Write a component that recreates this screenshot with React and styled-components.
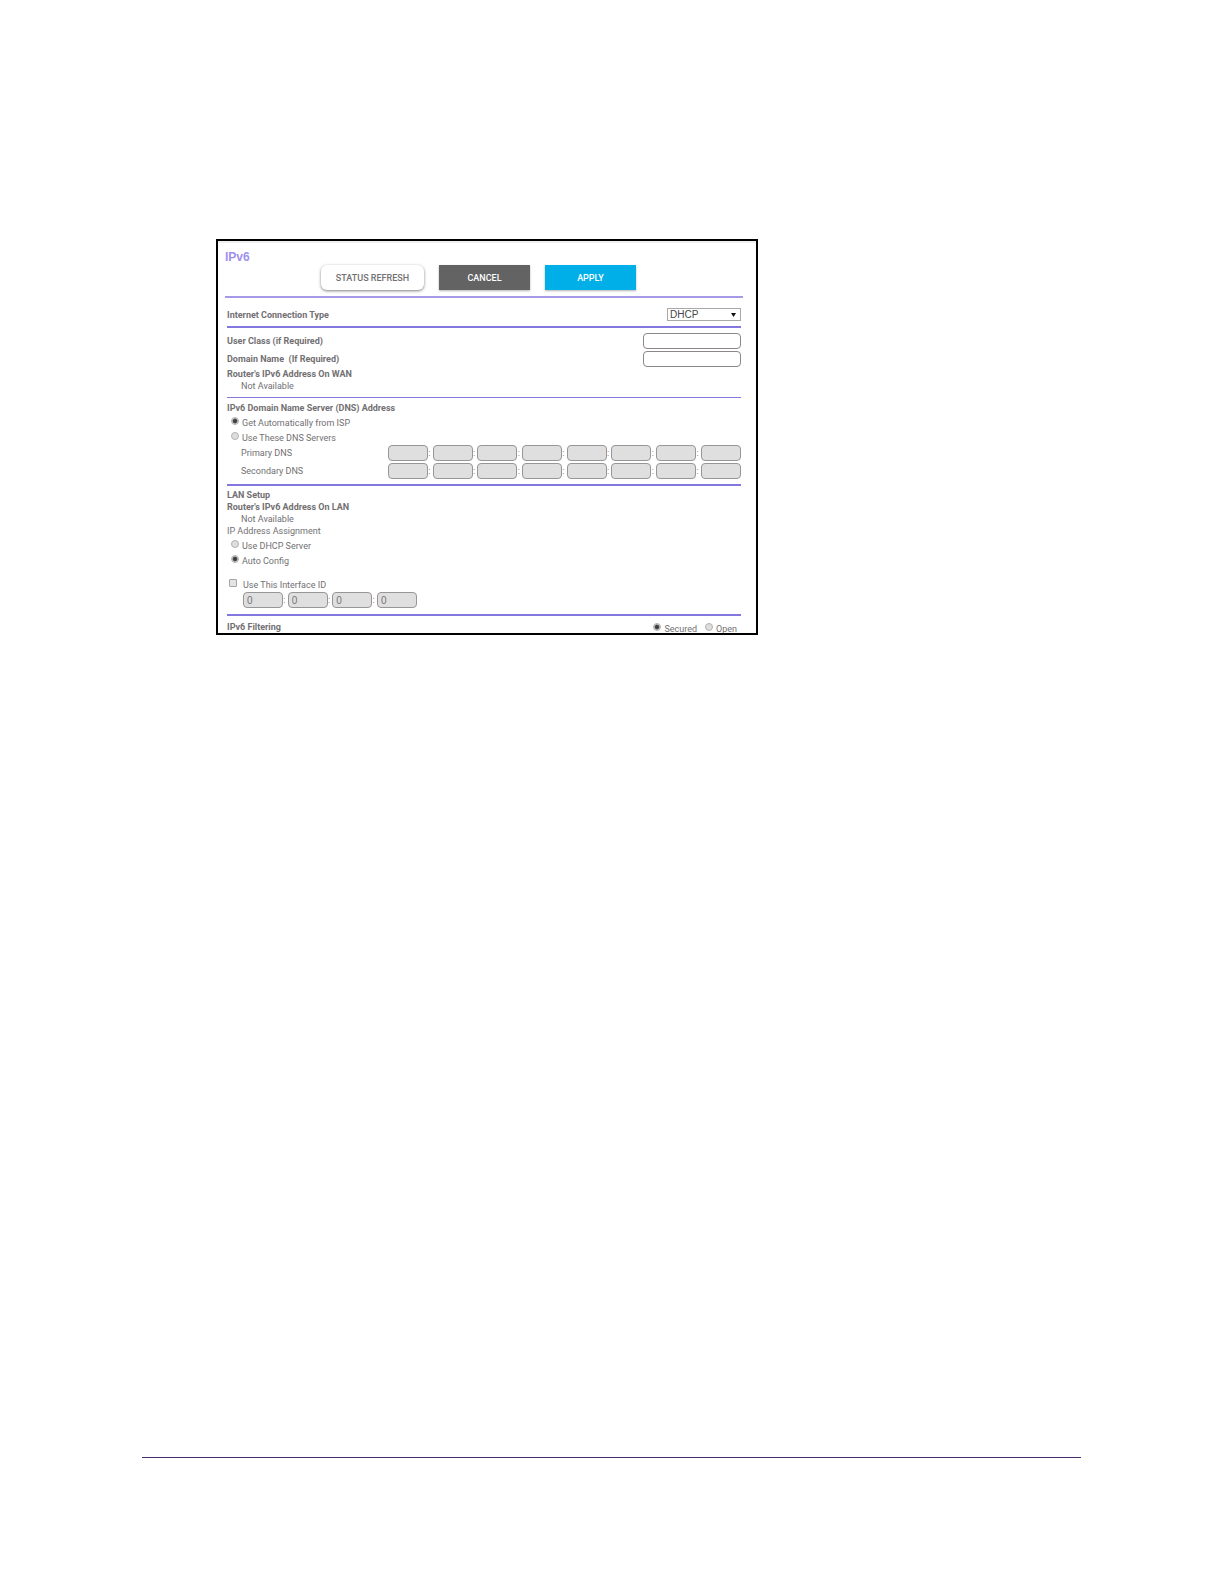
import React, { useState } from 'react'
import styled, { createGlobalStyle, ThemeProvider } from 'styled-components'

const theme = {
  colors: {
    text: '#727072',
    title: '#9f90ee',
    headerRule: '#a898e8',
    rule: '#8377e0',
    apply: '#00aee8',
    cancel: '#636363',
    disabled: '#e0dfdf',
    footer: '#4d2a68',
  },
  font: {
    body: 'Roboto, "Liberation Sans", Arial, sans-serif',
    field: '"Liberation Sans", Arial, sans-serif',
  },
}

const GlobalStyle = createGlobalStyle`
  *, *::before, *::after { box-sizing: border-box; }
  body { margin: 0; background: #fff; }
  input, select, button { margin: 0; font-family: inherit; }
`

const Page = styled.div`
  min-height: 100vh;
  display: flex;
  flex-direction: column;
  justify-content: space-between;
  padding: 239px 143px 126px 142px;
  font-family: ${({ theme }) => theme.font.body};
  font-size: 9px;
  line-height: 12px;
  color: ${({ theme }) => theme.colors.text};
`

const Main = styled.main`
  padding-left: 74px;
`

const Panel = styled.form`
  width: 100%;
  max-width: 542px;
  border: 2px solid #000;
  overflow: hidden;
`

const TopStrip = styled.div`
  height: 2px;
  background: #efefef;
`

const Header = styled.header`
  margin: 0 13px 0 7px;
  padding: 6px 0;
  border-bottom: 2px solid ${({ theme }) => theme.colors.headerRule};
`

const Title = styled.h1`
  margin: 0;
  font-family: ${({ theme }) => theme.font.field};
  font-size: 12px;
  line-height: 16px;
  color: ${({ theme }) => theme.colors.title};
`

const Toolbar = styled.div`
  display: flex;
  justify-content: center;
  gap: 15px;
  padding-right: 11px;
`

const Button = styled.button`
  width: 91px;
  height: 25px;
  padding: 0;
  border: none;
  font-size: 9px;
  font-weight: 500;
  color: #fff;
  background: ${({ theme, $tone }) => theme.colors[$tone]};
  box-shadow: 0 1px 2px rgba(0, 0, 0, 0.3);
`

const OutlineButton = styled(Button)`
  width: 103px;
  border-radius: 6px;
  color: ${({ theme }) => theme.colors.text};
  background: #fff;
  box-shadow: 0 1px 3px rgba(0, 0, 0, 0.5);
`

const Section = styled.section`
  margin: 0 15px 0 9px;
  padding: ${({ $top }) => $top}px 0 ${({ $bottom = 5 }) => $bottom}px;
  border-bottom: ${({ $rule = 2 }) => $rule}px solid ${({ theme }) => theme.colors.rule};
`

const LastSection = styled(Section)`
  padding-bottom: 0;
  border-bottom: none;
`

const Row = styled.div`
  display: flex;
  justify-content: space-between;
  align-items: center;
  height: ${({ $height = 18 }) => $height}px;
  padding-left: ${({ $indent = 0 }) => $indent}px;
`

const Heading = styled.h2`
  margin: 0;
  font-size: 9px;
  line-height: 12px;
`

const BoldLabel = styled.label`
  font-weight: bold;
  white-space: pre;
`

const Text = styled.div`
  padding-left: ${({ $indent = 0 }) => $indent}px;
`

const TextInput = styled.input`
  width: 98px;
  height: 16px;
  padding: 0 3px;
  border: 1px solid #8b8688;
  border-radius: 4px;
  background: #fff;
  font-size: 10px;
`

const SelectBox = styled.div`
  position: relative;
  width: 74px;
  height: 13px;
`

const Select = styled.select`
  display: block;
  width: 100%;
  height: 100%;
  padding: 0 2px;
  border: 1px solid #a9a9a9;
  border-radius: 0;
  appearance: none;
  background: #fff;
  font-family: ${({ theme }) => theme.font.field};
  font-size: 10px;
  line-height: 11px;
  color: #444;
`

const Arrow = styled.svg`
  position: absolute;
  top: 5px;
  right: 5px;
  pointer-events: none;
`

const Option = styled.label`
  display: flex;
  align-items: flex-end;
  gap: 3px;
  height: 15px;
  padding-left: 4px;
`

const Radio = styled.input`
  appearance: none;
  flex: none;
  width: 8px;
  height: 8px;
  margin-bottom: 4px;
  border: 1px solid #b2b2b2;
  border-radius: 50%;
  background: #dedede;
  &:checked {
    background: radial-gradient(circle, #3c3c3c 0 1px, #555 2px, #e4e4e4 3px);
  }
`

const CheckOption = styled.label`
  display: flex;
  align-items: flex-start;
  gap: 6px;
  height: 12px;
  margin-top: 12px;
  padding-left: 2px;
`

const Checkbox = styled.input`
  appearance: none;
  flex: none;
  width: 8px;
  height: 8px;
  border: 1px solid #a5a5a5;
  border-radius: 1px;
  background: #e4e4e4;
  &:checked { background: #555; }
`

const Segments = styled.div`
  display: flex;
  justify-content: space-between;
  align-items: center;
  width: ${({ $width }) => $width}px;
`

const Segment = styled.input`
  width: 40px;
  height: 16px;
  padding: 0 3px;
  border: 1px solid #989596;
  border-radius: 4px;
  background: ${({ theme }) => theme.colors.disabled};
  font-family: ${({ theme }) => theme.font.field};
  font-size: 10px;
  color: #757374;
`

const Colon = styled.span`
  margin-right: 2px;
`

const FilterOptions = styled.div`
  display: flex;
  gap: 4px;
  padding-right: 4px;
`

const FooterRule = styled.hr`
  width: 100%;
  height: 1px;
  margin: 0;
  border: none;
  background: ${({ theme }) => theme.colors.footer};
`

const AddressInput = ({ label, name, count, width, value = '' }) => (
  <Segments $width={width} role='group' aria-label={label}>
    {Array.from({ length: count }, (_, idx) => (
      <React.Fragment key={idx}>
        {idx > 0 && <Colon>:</Colon>}
        <Segment
          name={`${name}${idx}`}
          aria-label={`${label} ${idx + 1}`}
          defaultValue={value}
          disabled
        />
      </React.Fragment>
    ))}
  </Segments>
)

const RadioOption = ({ name, value, current, onChange, children }) => (
  <Option>
    <Radio
      type='radio'
      name={name}
      value={value}
      checked={current === value}
      onChange={() => onChange(value)}
    />
    {children}
  </Option>
)

const App = () => {
  const [dns, setDns] = useState('auto')
  const [assign, setAssign] = useState('config')
  const [filter, setFilter] = useState('secured')

  return (
    <ThemeProvider theme={theme}>
      <GlobalStyle />
      <Page>
        <Main>
          <Panel onSubmit={e => e.preventDefault()}>
            <TopStrip />
            <Header>
              <Title>IPv6</Title>
              <Toolbar>
                <OutlineButton type='button'>STATUS REFRESH</OutlineButton>
                <Button type='reset' $tone='cancel'>CANCEL</Button>
                <Button type='submit' $tone='apply'>APPLY</Button>
              </Toolbar>
            </Header>

            <Section $top={10}>
              <Row $height={13}>
                <BoldLabel htmlFor='connection'>Internet Connection Type</BoldLabel>
                <SelectBox>
                  <Select id='connection' defaultValue='dhcp'>
                    <option value='dhcp'>DHCP</option>
                  </Select>
                  <Arrow width='5' height='4' viewBox='0 0 5 4'>
                    <path d='M0 0h5L2.5 4z' fill='#111' />
                  </Arrow>
                </SelectBox>
              </Row>
            </Section>

            <Section $top={4} $rule={1}>
              <Row>
                <BoldLabel htmlFor='userClass'>User Class (if Required)</BoldLabel>
                <TextInput id='userClass' type='text' />
              </Row>
              <Row>
                <BoldLabel htmlFor='domainName'>{'Domain Name  (If Required)'}</BoldLabel>
                <TextInput id='domainName' type='text' />
              </Row>
              <Heading>Router's IPv6 Address On WAN</Heading>
              <Text $indent={14}>Not Available</Text>
            </Section>

            <Section $top={4} $bottom={4}>
              <Heading>IPv6 Domain Name Server (DNS) Address</Heading>
              <RadioOption name='dns' value='auto' current={dns} onChange={setDns}>
                Get Automatically from ISP
              </RadioOption>
              <RadioOption name='dns' value='manual' current={dns} onChange={setDns}>
                Use These DNS Servers
              </RadioOption>
              <Row $indent={14}>
                <span>Primary DNS</span>
                <AddressInput label='Primary DNS' name='primary' count={8} width={353} />
              </Row>
              <Row $indent={14}>
                <span>Secondary DNS</span>
                <AddressInput label='Secondary DNS' name='secondary' count={8} width={353} />
              </Row>
            </Section>

            <Section $top={3}>
              <Heading>LAN Setup</Heading>
              <Heading>Router's IPv6 Address On LAN</Heading>
              <Text $indent={14}>Not Available</Text>
              <Text>IP Address Assignment</Text>
              <RadioOption name='assign' value='dhcp' current={assign} onChange={setAssign}>
                Use DHCP Server
              </RadioOption>
              <RadioOption name='assign' value='config' current={assign} onChange={setAssign}>
                Auto Config
              </RadioOption>
              <CheckOption>
                <Checkbox type='checkbox' name='interfaceId' />
                Use This Interface ID
              </CheckOption>
              <Row $indent={16}>
                <AddressInput label='Interface ID' name='interface' count={4} width={174} value='0' />
              </Row>
            </Section>

            <LastSection $top={5}>
              <Row $height={12}>
                <Heading>IPv6 Filtering</Heading>
                <FilterOptions>
                  <RadioOption name='filter' value='secured' current={filter} onChange={setFilter}>
                    Secured
                  </RadioOption>
                  <RadioOption name='filter' value='open' current={filter} onChange={setFilter}>
                    Open
                  </RadioOption>
                </FilterOptions>
              </Row>
            </LastSection>
          </Panel>
        </Main>
        <FooterRule />
      </Page>
    </ThemeProvider>
  )
}

export default App
